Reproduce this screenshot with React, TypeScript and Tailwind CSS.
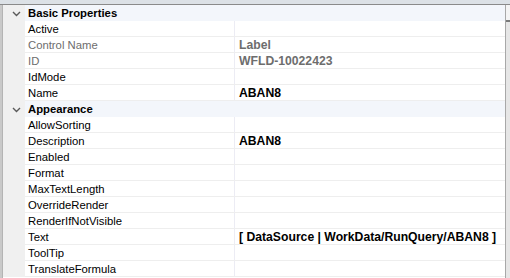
import React from 'react';

type Row = { name: string; value?: string; dim?: boolean };
type Section = { title: string; rows: Row[] };

const sections: Section[] = [
  {
    title: 'Basic Properties',
    rows: [
      { name: 'Active' },
      { name: 'Control Name', value: 'Label', dim: true },
      { name: 'ID', value: 'WFLD-10022423', dim: true },
      { name: 'IdMode' },
      { name: 'Name', value: 'ABAN8' },
    ],
  },
  {
    title: 'Appearance',
    rows: [
      { name: 'AllowSorting' },
      { name: 'Description', value: 'ABAN8' },
      { name: 'Enabled' },
      { name: 'Format' },
      { name: 'MaxTextLength' },
      { name: 'OverrideRender' },
      { name: 'RenderIfNotVisible' },
      { name: 'Text', value: '[ DataSource | WorkData/RunQuery/ABAN8 ]' },
      { name: 'ToolTip' },
      { name: 'TranslateFormula' },
    ],
  },
];

const Chevron = () => (
  <svg width="9" height="6" viewBox="0 0 9 6" className="ml-[9px]">
    <polyline points="1,1 4.5,4.5 8,1" fill="none" stroke="#5a5a5a" strokeWidth="1.4" />
  </svg>
);

const App: React.FC = () => {
  return (
    <div
      className="w-[510px] h-[278px] overflow-hidden flex flex-col bg-white text-[11.3px] text-black"
      style={{ fontFamily: '"Liberation Sans", Arial, sans-serif' }}
    >
      <div className="h-[5px] shrink-0 bg-[#dce1e6] border-b border-[#8a8a8a]" />
      <div className="flex flex-1 min-h-0">
        <div className="w-[3px] shrink-0 bg-[#c9c9c9] border-r border-[#b4b4b4]" />
        <div className="flex-1 flex flex-col">
          {sections.map((s) => (
            <React.Fragment key={s.title}>
              <div className="flex h-[16px] shrink-0">
                <div className="w-[22px] shrink-0 bg-[#f0f0f0] flex items-center pt-px">
                  <Chevron />
                </div>
                <div className="flex-1 bg-[#f3f6fb] flex items-center pl-[3px] pt-px font-bold">
                  {s.title}
                </div>
              </div>
              {s.rows.map((r) => (
                <div key={r.name} className="flex h-[16px] shrink-0">
                  <div className="w-[22px] shrink-0 bg-[#f0f0f0]" />
                  <div className="flex flex-1 border-b border-[#eeeeee]">
                    <div
                      className={`w-[209px] shrink-0 flex items-center pl-[3px] pt-px ${r.dim ? 'text-[#6d6d6d]' : ''}`}
                    >
                      {r.name}
                    </div>
                    <div
                      className={`flex-1 border-l border-[#ececf4] flex items-center pl-[4px] pt-px font-bold text-[12.2px] whitespace-nowrap ${r.dim ? 'text-[#6d6d6d]' : ''}`}
                    >
                      {r.value}
                    </div>
                  </div>
                </div>
              ))}
            </React.Fragment>
          ))}
        </div>
        <div className="w-[5px] shrink-0 border-l border-[#a8a8a8] bg-[#ebebeb] flex flex-col">
          <div className="h-[15px] bg-[#f4f4f4]" />
          <div className="h-[2px] bg-[#7a7a7a]" />
          <div className="flex-1 bg-[#e6e6e6]" />
        </div>
      </div>
    </div>
  );
};

export default App;
